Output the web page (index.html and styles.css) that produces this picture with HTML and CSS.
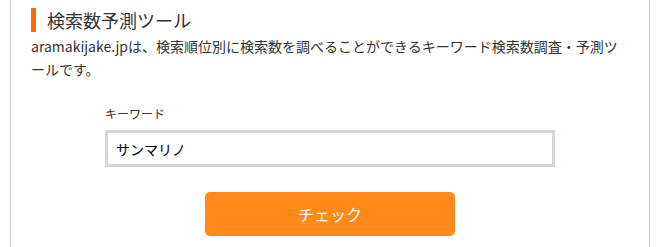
FILE: index.html
```html
<!DOCTYPE html>
<html lang="ja">
<head>
<meta charset="utf-8">
<link rel="stylesheet" href="styles.css">
</head>
<body>
<div class="box">
  <h2 class="title">検索数予測ツール</h2>
  <p class="desc">aramakijake.jpは、検索順位別に検索数を調べることができるキーワード検索数調査・予測ツールです。</p>
  <form class="form">
    <div class="field">
      <label class="label">キーワード</label>
      <input class="input" type="text" value="サンマリノ">
    </div>
    <button class="btn" type="button">チェック</button>
  </form>
</div>
</body>
</html>
```
FILE: styles.css
```css
html, body {
  margin: 0;
  padding: 0;
  background: #fff;
}
body {
  font-family: "Noto Sans CJK JP", "Noto Sans", sans-serif;
  color: #333;
}
.box {
  margin-left: 10px;
  width: 598px;
  min-height: 260px;
  border-left: 1px solid #cfcfcf;
  border-right: 1px solid #cfcfcf;
  padding: 8px 20px 0 20px;
}
.title {
  margin: 0;
  font-size: 18px;
  font-weight: normal;
  line-height: 24px;
  height: 24px;
  border-left: 5px solid #ff6a00;
  padding-left: 11px;
  color: #333;
}
.desc {
  margin: 3px 0 0 0;
  font-size: 14px;
  line-height: 23px;
  color: #333;
}
.form {
  display: flex;
  flex-direction: column;
  align-items: center;
  margin-top: 24px;
}
.field {
  display: flex;
  flex-direction: column;
  width: 450px;
}
.label {
  font-size: 12px;
  line-height: 18px;
  color: #333;
  margin-bottom: 7px;
}
.input {
  box-sizing: border-box;
  width: 450px;
  height: 37px;
  border: 3px solid #d9d5d5;
  padding: 0 8px;
  font-family: "Noto Sans CJK JP", sans-serif;
  font-size: 14px;
  color: #000;
  outline: none;
  margin: 0;
}
.btn {
  margin-top: 25px;
  width: 250px;
  height: 44px;
  border: none;
  border-radius: 5px;
  background: #ff8a1a;
  color: #fff;
  font-family: "Noto Sans CJK JP", sans-serif;
  font-size: 16px;
  cursor: pointer;
}
```
